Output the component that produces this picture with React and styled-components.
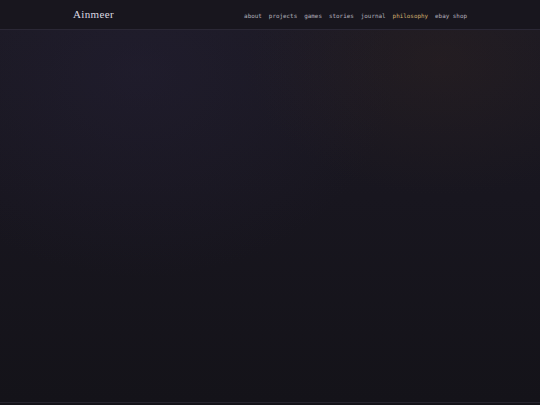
import React from 'react';
import styled, { createGlobalStyle } from 'styled-components';

const GlobalStyle = createGlobalStyle`
  html, body {
    margin: 0;
    padding: 0;
    background: #141319;
  }
  * { box-sizing: border-box; }
`;

const Page = styled.div`
  min-height: 405px;
  display: flex;
  flex-direction: column;
  background: #141319;
`;

const Header = styled.header`
  height: 30px;
  background: #18161e;
  border-bottom: 1px solid #2b2836;
`;

const HeaderInner = styled.div`
  max-width: 394px;
  height: 100%;
  margin: 0 auto;
  display: flex;
  align-items: center;
  justify-content: space-between;
`;

const Logo = styled.a`
  font-family: "Liberation Serif", "DejaVu Serif", serif;
  font-size: 11px;
  letter-spacing: 0.35px;
  color: #dcd9e2;
  text-decoration: none;
  margin-top: -2px;
`;

const Nav = styled.nav`
  display: flex;
  gap: 7px;
  margin-top: 2px;
`;

const NavLink = styled.a`
  font-family: "DejaVu Sans Mono", "Liberation Mono", monospace;
  font-size: 5.9px;
  color: ${p => (p.$active ? '#cfae6e' : '#b3b0bc')};
  text-decoration: none;
`;

// soft violet glow on the left, a faint warm one on the right
const Main = styled.main`
  height: 372px;
  background:
    radial-gradient(ellipse 260px 180px at 440px 30px, rgba(58, 40, 32, 0.28), transparent 75%),
    radial-gradient(ellipse 320px 260px at 140px 40px, rgba(42, 36, 64, 0.32), transparent 80%),
    linear-gradient(180deg, #1b1923 0%, #18161f 45%, #141319 100%);
`;

const Footer = styled.footer`
  flex: 1;
  border-top: 1px solid #26242e;
  background: #141319;
`;

const links = ['about', 'projects', 'games', 'stories', 'journal', 'philosophy', 'ebay shop'];

export default function App() {
  return (
    <Page>
      <GlobalStyle />
      <Header>
        <HeaderInner>
          <Logo href="#">Ainmeer</Logo>
          <Nav>
            {links.map(l => (
              <NavLink key={l} href="#" $active={l === 'philosophy'}>{l}</NavLink>
            ))}
          </Nav>
        </HeaderInner>
      </Header>
      <Main />
      <Footer />
    </Page>
  );
}
